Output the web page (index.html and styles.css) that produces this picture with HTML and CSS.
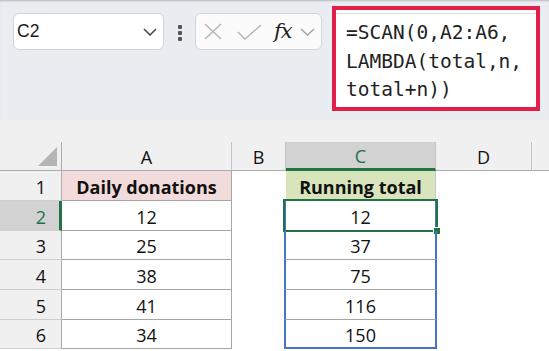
FILE: index.html
```html
<!doctype html>
<html lang="en">
<head>
  <meta charset="UTF-8">
  <title>SCAN running total</title>
  <link rel="stylesheet" href="styles.css">
</head>
<body>
  <div class="toolbar">
    <div class="namebox">
      <span>C2</span>
      <svg width="14" height="8" viewBox="0 0 14 8"><path d="M1 1l6 6 6-6" fill="none" stroke="#444" stroke-width="1.5"/></svg>
    </div>

    <div class="dots"><i></i><i></i><i></i></div>

    <div class="fxbox">
      <svg class="ico-x" width="18" height="17" viewBox="0 0 18 17"><path d="M1 1l16 15M17 1L1 16" fill="none" stroke="#b3b3b3" stroke-width="1.4"/></svg>
      <svg class="ico-ok" width="25" height="16" viewBox="0 0 25 16"><path d="M1 8l7 7L24 1" fill="none" stroke="#b3b3b3" stroke-width="1.4"/></svg>
      <span class="fx">fx</span>
      <svg class="ico-dd" width="15" height="8" viewBox="0 0 15 8"><path d="M1 1l6.5 6 6.5-6" fill="none" stroke="#a0a0a0" stroke-width="1.3"/></svg>
    </div>

    <div class="formula">=SCAN(0,A2:A6,<br>LAMBDA(total,n,<br>total+n))</div>
  </div>

  <div class="sheet">
    <div class="grid">
      <div class="hd corner"><i class="tri"></i></div>
      <div class="hd">A</div>
      <div class="hd">B</div>
      <div class="hd sel-col">C</div>
      <div class="hd">D</div>
      <div class="hd last"></div>

      <div class="rn">1</div>
      <div class="cell a title-a">Daily donations</div>
      <div class="cell"></div>
      <div class="cell title-c">Running total</div>
      <div class="cell"></div>
      <div class="cell"></div>

      <div class="rn sel-row">2</div>
      <div class="cell a">12</div>
      <div class="cell"></div>
      <div class="cell c active">12<span class="selbox"><i class="handle"></i></span></div>
      <div class="cell"></div>
      <div class="cell"></div>

      <div class="rn">3</div>
      <div class="cell a">25</div>
      <div class="cell"></div>
      <div class="cell c">37</div>
      <div class="cell"></div>
      <div class="cell"></div>

      <div class="rn">4</div>
      <div class="cell a">38</div>
      <div class="cell"></div>
      <div class="cell c">75</div>
      <div class="cell"></div>
      <div class="cell"></div>

      <div class="rn">5</div>
      <div class="cell a">41</div>
      <div class="cell"></div>
      <div class="cell c">116</div>
      <div class="cell"></div>
      <div class="cell"></div>

      <div class="rn">6</div>
      <div class="cell a">34</div>
      <div class="cell"></div>
      <div class="cell c end">150</div>
      <div class="cell"></div>
      <div class="cell"></div>
    </div>
  </div>
</body>
</html>
```

FILE: styles.css
```css
*{
  box-sizing: border-box;
}

body{
  margin: 0;
  width: 549px;
  height: 351px;
  overflow: hidden;
  color: #1a1a1a;
  font-family: "Liberation Sans", Arial, sans-serif;
  background: #fff;
}

/* formula bar strip */
.toolbar{
  display: flex;
  align-items: flex-start;
  height: 120px;
  padding: 6px 0 0 13px;
  background: #e9edf1;
  box-shadow: inset 0 2px 2px -1px rgba(0, 0, 0, .22);
}

.namebox{
  display: flex;
  align-items: center;
  justify-content: space-between;
  margin-top: 7px;
  width: 151px;
  height: 37px;
  padding: 0 6px 0 3px;
  font-size: 17.5px;
  background: #fff;
  border: 1px solid #d3d6d9;
  border-radius: 6px;
}

.dots{
  display: flex;
  flex-direction: column;
  gap: 2.5px;
  margin: 19px 13px 0 14px;
}

.dots i{
  display: block;
  width: 4px;
  height: 3.5px;
  background: #555;
  border-radius: 1px;
}

.fxbox{
  display: flex;
  align-items: center;
  margin-top: 7px;
  width: 127px;
  height: 37px;
  padding-left: 8px;
  background: #fbfbfb;
  border: 1px solid #d3d6d9;
  border-radius: 6px;
}

.ico-ok{
  margin-left: 15px;
}

.fx{
  margin-left: 12px;
  color: #222;
  font-family: "DejaVu Serif", "Liberation Serif", serif;
  font-style: italic;
  font-size: 21px;
  line-height: 1;
  letter-spacing: -1px;
}

.ico-dd{
  margin-left: 8px;
}

.formula{
  margin-left: 10px;
  width: 208px;
  height: 105px;
  padding: 9px 0 0 10px;
  color: #222;
  font-family: "DejaVu Sans Mono", "Liberation Mono", monospace;
  font-size: 19.5px;
  line-height: 28.5px;
  white-space: nowrap;
  background: #fff;
  border: 4px solid #e21f4b;
  box-shadow: inset 0 3px 0 #fff, inset 0 4px 0 #dcdcdc;
}

/* worksheet */
.sheet{
  height: 231px;
  padding-top: 22px;
  background: #f0f0f0;
}

.grid{
  display: grid;
  grid-template-columns: 62px 170px 54px 150px 96px 1fr;
  grid-template-rows: 29px 30px 30px 29px 30px 30px 29px 1fr;
  height: 100%;
  color: #111;
  font-family: "Open Sans", sans-serif;
  font-size: 18px;
  background: #fff;
}

.hd, .rn, .cell{
  display: flex;
  align-items: center;
  justify-content: center;
}

.hd{
  position: relative;
  padding-top: 1px;
  background: #f0f0f0;
  border-right: 1px solid #c4c4c4;
  border-bottom: 1px solid #ababab;
}

.hd.last{
  border-right: 0;
}

.corner{
  border-right-color: #ababab;
}

.tri{
  position: absolute;
  right: 4px;
  bottom: 4px;
  width: 19px;
  height: 19px;
  background: #b4b4b4;
  clip-path: polygon(100% 0, 100% 100%, 0 100%);
}

.sel-col{
  color: #217346;
  background: #d2d2d2;
  border-bottom: 3px solid #217346;
}

.rn{
  justify-content: flex-end;
  padding: 2px 15px 0 0;
  background: #f0f0f0;
  border-right: 1px solid #ababab;
  border-bottom: 1px solid #cfcfcf;
}

.sel-row{
  color: #217346;
  background: #d2d2d2;
  border-right: 3px solid #217346;
  padding-right: 13px;
}

.cell{
  padding-top: 2px;
}

.a{
  border-right: 1px solid #a6a6a6;
  border-bottom: 1px solid #a6a6a6;
}

.title-a, .title-c{
  font-weight: bold;
}

.title-a{
  background: #f2dcdb;
}

.title-c{
  background: #d8e4bc;
  border-right: 1px solid #c8c8c8;
}

.c{
  position: relative;
  margin: 0 -1px 0 -2px;
  border-left: 2px solid #4a72c4;
  border-right: 2px solid #4a72c4;
  border-bottom: 1px solid #a6a6a6;
}

.c.end{
  border-bottom: 2px solid #4a72c4;
}

.selbox{
  position: absolute;
  top: -2px;
  left: -3px;
  right: -3px;
  bottom: -2px;
  border: 2px solid #217346;
}

.handle{
  position: absolute;
  right: -5px;
  bottom: -5px;
  width: 8px;
  height: 8px;
  background: #217346;
  border: 1px solid #fff;
}
```
